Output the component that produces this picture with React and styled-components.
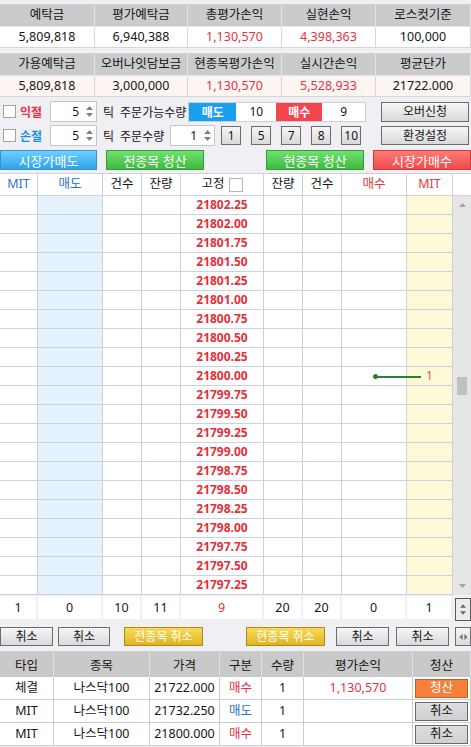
import styled, { createGlobalStyle } from "styled-components";

const COLS = "38px 65px 39px 39px 83px 39px 39px 65px 46px";
const RED = "#e6333d";
const BLUE = "#2f6fd0";

const acctTop = [
  { label: "예탁금", value: "5,809,818" },
  { label: "평가예탁금", value: "6,940,388" },
  { label: "총평가손익", value: "1,130,570", red: true },
  { label: "실현손익", value: "4,398,363", red: true },
  { label: "로스컷기준", value: "100,000" },
];
const acctBottom = [
  { label: "가용예탁금", value: "5,809,818" },
  { label: "오버나잇담보금", value: "3,000,000" },
  { label: "현종목평가손익", value: "1,130,570", red: true },
  { label: "실시간손익", value: "5,528,933", red: true },
  { label: "평균단가", value: "21722.000" },
];

const prices = Array.from({ length: 21 }, (_, i) => (21802.25 - i * 0.25).toFixed(2));

const summary = [
  { v: "1" }, { v: "0" }, { v: "10" }, { v: "11" }, { v: "9", red: true },
  { v: "20" }, { v: "20" }, { v: "0" }, { v: "1" },
];

const orders = [
  { type: "체결", name: "나스닥100", price: "21722.000", side: "매수", qty: "1", pl: "1,130,570", action: "청산" },
  { type: "MIT", name: "나스닥100", price: "21732.250", side: "매도", qty: "1", pl: "", action: "취소" },
  { type: "MIT", name: "나스닥100", price: "21800.000", side: "매수", qty: "1", pl: "", action: "취소" },
];

function Caret({ dir = "up", color = "#808080", size = 7 }) {
  const d = {
    up: "M0 4H7L3.5 0Z",
    down: "M0 0H7L3.5 4Z",
    left: "M4 0V7L0 3.5Z",
    right: "M0 0V7L4 3.5Z",
  }[dir];
  const vertical = dir === "up" || dir === "down";
  return (
    <svg
      width={vertical ? size : 4}
      height={vertical ? 4 : size}
      viewBox={vertical ? "0 0 7 4" : "0 0 4 7"}
    >
      <path d={d} fill={color} />
    </svg>
  );
}

function Spin({ value, width }) {
  return (
    <SpinBox $w={width}>
      <SpinValue>{value}</SpinValue>
      <SpinArrows>
        <Caret dir="up" />
        <Caret dir="down" />
      </SpinArrows>
    </SpinBox>
  );
}

export default function App() {
  return (
    <>
      <GlobalStyle />
      <Page>
        <InfoTable>
          {acctTop.map(({ label }) => (
            <InfoHead key={label}>{label}</InfoHead>
          ))}
          {acctTop.map(({ label, value, red }) => (
            <InfoValue key={label} $red={red}>
              {value}
            </InfoValue>
          ))}
        </InfoTable>
        <InfoTable $gap>
          {acctBottom.map(({ label }) => (
            <InfoHead key={label}>{label}</InfoHead>
          ))}
          {acctBottom.map(({ label, value, red }) => (
            <InfoValue key={label} $red={red} $tint>
              {value}
            </InfoValue>
          ))}
        </InfoTable>

        <ControlRow $mt={4}>
          <CheckBox />
          <SideLabel $color="#e8323c">익절</SideLabel>
          <Spin value="5" width={47} />
          <PlainText $ml={6}>틱</PlainText>
          <PlainText $ml={6}>주문가능수량</PlainText>
          <SideStrip>
            <SideTag $bg="#199ff0" $w={47}>매도</SideTag>
            <SideValue $w={40}>10</SideValue>
            <SideTag $bg="#f4444e" $w={46}>매수</SideTag>
            <SideValue $w={43}>9</SideValue>
          </SideStrip>
          <GrayButton $w={88} $h={20} $push>
            오버신청
          </GrayButton>
        </ControlRow>

        <ControlRow $mt={3}>
          <CheckBox />
          <SideLabel $color="#1a90e0">손절</SideLabel>
          <Spin value="5" width={47} />
          <PlainText $ml={6}>틱</PlainText>
          <PlainText $ml={6}>주문수량</PlainText>
          <SpinGap>
            <Spin value="1" width={45} />
          </SpinGap>
          <QtyButtons>
            {["1", "5", "7", "8", "10"].map((n) => (
              <GrayButton key={n} $w={20} $h={19}>
                {n}
              </GrayButton>
            ))}
          </QtyButtons>
          <GrayButton $w={88} $h={19} $push>
            환경설정
          </GrayButton>
        </ControlRow>

        <ActionRow>
          <ActionButton $tone="blue" $w={97}>시장가매도</ActionButton>
          <ActionButton $tone="green" $w={98} $ml={9}>전종목 청산</ActionButton>
          <ActionButton $tone="green" $w={98} $ml={62}>현종목 청산</ActionButton>
          <ActionButton $tone="red" $w={98} $ml={9}>시장가매수</ActionButton>
        </ActionRow>

        <GridHeader>
          <HeadCell $color={BLUE}>MIT</HeadCell>
          <HeadCell $color={BLUE}>매도</HeadCell>
          <HeadCell>건수</HeadCell>
          <HeadCell>잔량</HeadCell>
          <HeadCell>
            고정 <SmallCheck />
          </HeadCell>
          <HeadCell>잔량</HeadCell>
          <HeadCell>건수</HeadCell>
          <HeadCell $color="#e03a3a">매수</HeadCell>
          <HeadCell $color="#e03a3a">MIT</HeadCell>
          <HeadCell $last />
        </GridHeader>

        <GridBody>
          <Rows>
            {prices.map((p) => (
              <PriceRow key={p}>
                <Cell />
                <Cell $bg="#e3f2fd" />
                <Cell />
                <Cell />
                <Cell $price>{p}</Cell>
                <Cell />
                <Cell />
                <Cell />
                <Cell $bg="#fdf9d6" $mark>
                  {p === "21800.00" ? "1" : ""}
                </Cell>
                {p === "21800.00" && (
                  <Marker>
                    <MarkerDot />
                  </Marker>
                )}
              </PriceRow>
            ))}
          </Rows>
          <ScrollBar>
            <ScrollArrow>
              <Caret dir="up" color="#a4a4a4" size={9} />
            </ScrollArrow>
            <ScrollTrack>
              <Thumb />
            </ScrollTrack>
            <ScrollArrow>
              <Caret dir="down" color="#a4a4a4" size={9} />
            </ScrollArrow>
          </ScrollBar>
        </GridBody>

        <SummaryRow>
          {summary.map(({ v, red }, i) => (
            <SumCell key={i} $red={red}>
              {v}
            </SumCell>
          ))}
          <MiniSpinner>
            <Caret dir="up" color="#666" size={6} />
            <Caret dir="down" color="#666" size={6} />
          </MiniSpinner>
        </SummaryRow>

        <CancelRow>
          <GrayButton $w={53} $h={19}>취소</GrayButton>
          <GrayButton $w={52} $h={19} $ml={5}>취소</GrayButton>
          <YellowButton $w={79} $ml={14}>전종목 취소</YellowButton>
          <YellowButton $w={79} $ml={43}>현종목 취소</YellowButton>
          <GrayButton $w={53} $h={19} $ml={11}>취소</GrayButton>
          <GrayButton $w={53} $h={19} $ml={7}>취소</GrayButton>
          <GrayButton $w={16} $h={19} $ml={6} $tight>
            <Caret dir="left" color="#777" size={6} />
            <Caret dir="right" color="#777" size={6} />
          </GrayButton>
        </CancelRow>

        <OrderTable>
          {["타입", "종목", "가격", "구분", "수량", "평가손익", "청산"].map((h) => (
            <OrderHead key={h}>{h}</OrderHead>
          ))}
          {orders.map((o, i) => (
            <OrderLine key={i}>
              <OrderCell>{o.type}</OrderCell>
              <OrderCell>{o.name}</OrderCell>
              <OrderCell>{o.price}</OrderCell>
              <OrderCell $color={o.side === "매수" ? RED : BLUE}>{o.side}</OrderCell>
              <OrderCell>{o.qty}</OrderCell>
              <OrderCell $color={RED}>{o.pl}</OrderCell>
              <OrderCell>
                <RowButton $orange={o.action === "청산"}>{o.action}</RowButton>
              </OrderCell>
            </OrderLine>
          ))}
        </OrderTable>
      </Page>
    </>
  );
}

//#region STYLED COMPONENTS
const GlobalStyle = createGlobalStyle`
  html, body {
    margin: 0;
    padding: 0;
    background: #efeff4;
  }
  body {
    font-family: "Noto Sans", "Noto Sans CJK KR", sans-serif;
    font-size: 12px;
    color: #151515;
  }
  * {
    box-sizing: border-box;
  }
`;

const Page = styled.div`
  width: 471px;
  height: 747px;
  padding-top: 4px;
  display: flex;
  flex-direction: column;
  overflow: hidden;
`;

const InfoTable = styled.div`
  display: grid;
  grid-template-columns: 95px 93px 94px 94px 95px;
  grid-template-rows: 22px 21px;
  margin-top: ${({ $gap }) => ($gap ? "5px" : "0")};
  border-top: 1px solid #d2d2d6;
`;

const InfoHead = styled.div`
  background: #cbcbcb;
  border-right: 1px solid #e4e4e4;
  border-bottom: 1px solid #e4e4e4;
  display: flex;
  align-items: center;
  justify-content: center;
  font-size: 12.5px;
  line-height: 1;
`;

const InfoValue = styled.div`
  background: ${({ $tint }) => ($tint ? "#fdf5f2" : "#ffffff")};
  color: ${({ $red }) => ($red ? RED : "#151515")};
  border-right: 1px solid #d6d6da;
  border-bottom: 1px solid #d6d6da;
  display: flex;
  align-items: center;
  justify-content: center;
  font-size: 12.5px;
  line-height: 1;
`;

const ControlRow = styled.div`
  display: flex;
  align-items: center;
  height: 21px;
  margin-top: ${({ $mt }) => $mt}px;
`;

const CheckBox = styled.div`
  width: 13px;
  height: 13px;
  margin-left: 3px;
  background: #fff;
  border: 1px solid #a2a2a2;
`;

const SmallCheck = styled.span`
  display: inline-block;
  width: 14px;
  height: 14px;
  margin-left: 4px;
  background: #fff;
  border: 1px solid #b4b4b4;
`;

const SideLabel = styled.span`
  width: 26px;
  margin-left: 4px;
  font-weight: 700;
  color: ${({ $color }) => $color};
`;

const SpinBox = styled.div`
  width: ${({ $w }) => $w}px;
  height: 21px;
  margin-left: 4px;
  display: flex;
  background: #fff;
  border: 1px solid #c6c6c6;
`;

const SpinGap = styled.div`
  margin-left: 2px;
`;

const SpinValue = styled.div`
  flex: 1;
  display: flex;
  align-items: center;
  justify-content: flex-end;
  padding-right: 4px;
`;

const SpinArrows = styled.div`
  width: 13px;
  display: flex;
  flex-direction: column;
  justify-content: space-around;
  align-items: center;
  padding: 2px 0;
`;

const PlainText = styled.span`
  margin-left: ${({ $ml }) => $ml}px;
  white-space: nowrap;
`;

const SideStrip = styled.div`
  display: flex;
  height: 20px;
  margin-left: 2px;
  border: 1px solid #cfcfd6;
  background: #fff;
`;

const SideTag = styled.div`
  width: ${({ $w }) => $w}px;
  background: ${({ $bg }) => $bg};
  color: #fff;
  font-weight: 700;
  display: flex;
  align-items: center;
  justify-content: center;
`;

const SideValue = styled.div`
  width: ${({ $w }) => $w}px;
  display: flex;
  align-items: center;
  justify-content: center;
`;

const GrayButton = styled.div`
  width: ${({ $w }) => $w}px;
  height: ${({ $h }) => $h}px;
  margin-left: ${({ $push, $ml }) => ($push ? "auto" : `${$ml || 0}px`)};
  margin-right: ${({ $push }) => ($push ? "2px" : "0")};
  flex-shrink: 0;
  display: flex;
  align-items: center;
  justify-content: center;
  gap: ${({ $tight }) => ($tight ? "1px" : "0")};
  background: linear-gradient(#f6f6f6, #d9d9d9);
  border: 1px solid #6c6c6c;
  color: #151515;
  line-height: 1;
`;

const QtyButtons = styled.div`
  display: flex;
  gap: 10px;
  margin-left: 6px;
`;

const ActionRow = styled.div`
  display: flex;
  height: 20px;
  margin-top: 4px;
`;

const tones = {
  blue: { top: "#6fd0ff", bottom: "#2ea2ec", border: "#3a8fcf" },
  green: { top: "#72e072", bottom: "#3dba3d", border: "#349c34" },
  red: { top: "#ff7a7a", bottom: "#f04a4a", border: "#cf3b3b" },
};

const ActionButton = styled.div`
  width: ${({ $w }) => $w}px;
  margin-left: ${({ $ml }) => $ml || 0}px;
  display: flex;
  align-items: center;
  justify-content: center;
  color: #fff;
  font-size: 13px;
  background: linear-gradient(
    ${({ $tone }) => tones[$tone].top},
    ${({ $tone }) => tones[$tone].bottom}
  );
  border: 1px solid ${({ $tone }) => tones[$tone].border};
`;

const GridHeader = styled.div`
  display: grid;
  grid-template-columns: ${COLS} 18px;
  height: 23px;
  margin-top: 3px;
  background: #fff;
  border-top: 1px solid #cfd0df;
  border-bottom: 1px solid #cfd0df;
`;

const HeadCell = styled.div`
  display: flex;
  align-items: center;
  justify-content: center;
  color: ${({ $color }) => $color || "#151515"};
  border-right: ${({ $last }) => ($last ? "none" : "1px solid #cfd0df")};
  font-size: 12.5px;
  line-height: 1;
`;

const GridBody = styled.div`
  display: flex;
  height: 399px;
`;

const Rows = styled.div`
  width: 453px;
  display: flex;
  flex-direction: column;
  background: #fff;
`;

const PriceRow = styled.div`
  position: relative;
  display: grid;
  grid-template-columns: ${COLS};
  height: 19px;
`;

const Cell = styled.div`
  background: ${({ $bg }) => $bg || "#fff"};
  border-right: 1px solid #cfd0df;
  border-bottom: 1px solid #cfd0df;
  display: flex;
  align-items: center;
  justify-content: center;
  color: ${({ $price, $mark }) => ($price ? "#e3303a" : $mark ? "#f05050" : "#151515")};
  font-weight: ${({ $price }) => ($price ? 700 : 400)};
  line-height: 1;
`;

const Marker = styled.div`
  position: absolute;
  left: 375px;
  top: 9px;
  width: 46px;
  height: 1.5px;
  background: #2e7d32;
`;

const MarkerDot = styled.div`
  position: absolute;
  left: -2px;
  top: -2px;
  width: 5px;
  height: 5px;
  border-radius: 50%;
  background: #2e7d32;
`;

const ScrollBar = styled.div`
  width: 18px;
  display: flex;
  flex-direction: column;
  background: #e6e6e6;
`;

const ScrollArrow = styled.div`
  height: 18px;
  display: flex;
  align-items: center;
  justify-content: center;
`;

const ScrollTrack = styled.div`
  flex: 1;
  display: flex;
  flex-direction: column;
  align-items: center;
`;

const Thumb = styled.div`
  width: 10px;
  height: 18px;
  margin-top: 163px;
  background: #c0c0c0;
`;

const SummaryRow = styled.div`
  display: grid;
  grid-template-columns: ${COLS} 18px;
  height: 26px;
  padding-top: 1px;
`;

const SumCell = styled.div`
  height: 23px;
  margin-right: 2px;
  background: #fff;
  display: flex;
  align-items: center;
  justify-content: center;
  font-size: 12.5px;
  color: ${({ $red }) => ($red ? RED : "#151515")};
`;

const MiniSpinner = styled.div`
  height: 23px;
  margin: 2px 0 0 2px;
  display: flex;
  flex-direction: column;
  justify-content: space-around;
  align-items: center;
  padding: 3px 0;
  background: #ececec;
  border: 1px solid #5a5a5a;
`;

const CancelRow = styled.div`
  display: flex;
  height: 19px;
  margin-top: 6px;
`;

const YellowButton = styled.div`
  width: ${({ $w }) => $w}px;
  margin-left: ${({ $ml }) => $ml || 0}px;
  display: flex;
  align-items: center;
  justify-content: center;
  color: #fff;
  background: linear-gradient(#f8da58, #e0b424);
  border: 1px solid #b08a16;
  line-height: 1;
`;

const OrderTable = styled.div`
  display: grid;
  grid-template-columns: 54px 96px 70px 42px 42px 109px 58px;
  grid-auto-rows: 23px;
  grid-template-rows: 25px;
  margin-top: 5px;
  border-top: 1px solid #d0d0d0;
`;

const OrderHead = styled.div`
  background: #c9c9c9;
  border-right: 1px solid #e0e0e0;
  display: flex;
  align-items: center;
  justify-content: center;
  font-size: 12.5px;
`;

const OrderLine = styled.div`
  display: contents;
`;

const OrderCell = styled.div`
  background: #fff;
  border-right: 1px solid #cccccc;
  border-bottom: 1px solid #cccccc;
  display: flex;
  align-items: center;
  justify-content: center;
  color: ${({ $color }) => $color || "#151515"};
  font-size: 12.5px;
  line-height: 1;
`;

const RowButton = styled.div`
  width: 53px;
  height: 19px;
  display: flex;
  align-items: center;
  justify-content: center;
  font-size: 12.5px;
  color: ${({ $orange }) => ($orange ? "#fff" : "#151515")};
  background: ${({ $orange }) => ($orange ? "#f4803c" : "linear-gradient(#dedede, #cfcfcf)")};
  border: 1px solid ${({ $orange }) => ($orange ? "#c65e22" : "#6a6a6a")};
`;
//#endregion
